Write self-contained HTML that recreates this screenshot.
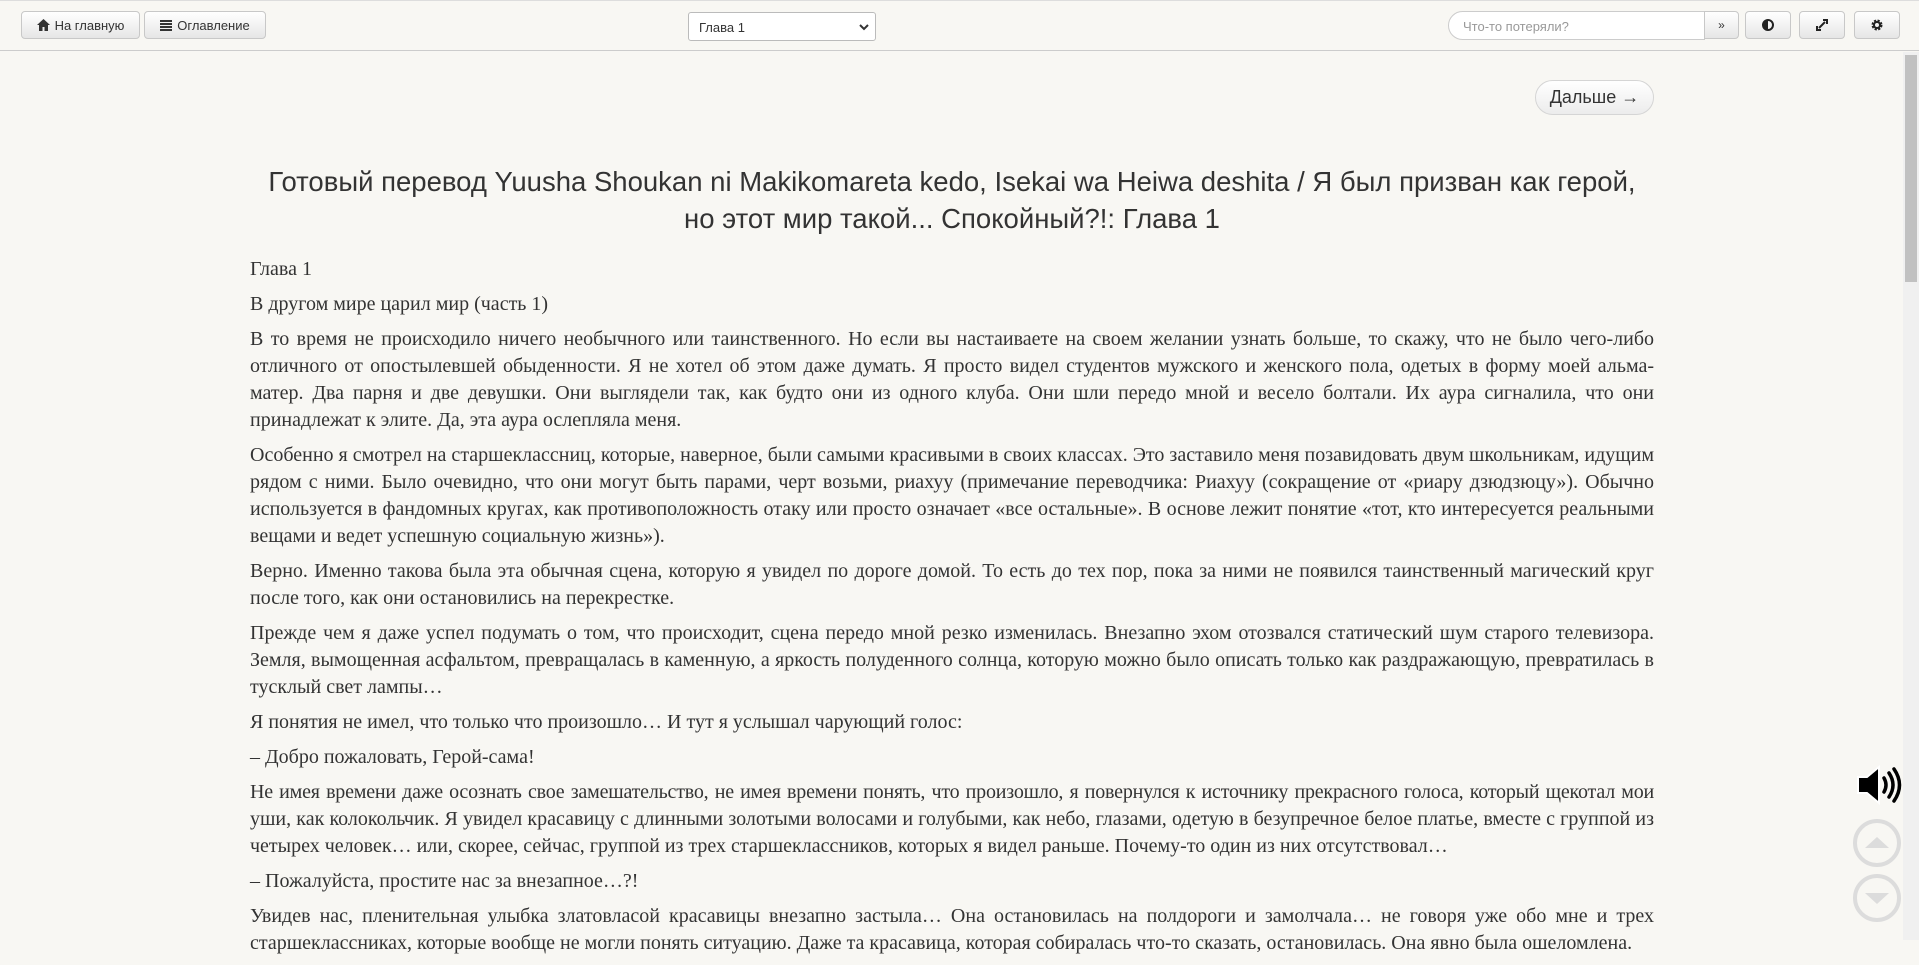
<!DOCTYPE html>
<html><head><meta charset="utf-8"><style>
*{box-sizing:border-box}
html,body{margin:0;padding:0;width:1919px;height:940px;overflow:hidden;background:#f8f7f3;font-family:"Liberation Sans",sans-serif}
.bar{position:absolute;left:0;top:0;width:1919px;height:51px;border-bottom:1px solid #ccc;border-top:1px solid #ddd;background:#f8f7f3}
.btn{position:absolute;top:10px;height:28px;border:1px solid #c8c8c8;border-radius:4px;background:linear-gradient(#fff,#e6e6e6);font-size:13px;color:#333;display:flex;align-items:center;justify-content:center;gap:5px}
.sel{position:absolute;left:688px;top:11px;width:188px;height:29px;border:1px solid #bbb;border-radius:3px;background:#fff;font-size:13px;color:#333;padding:7px 10px}
.search{position:absolute;left:1448px;top:10px;width:257px;height:29px;border:1px solid #ccc;border-radius:15px 0 0 15px;background:#fff;font-size:13px;color:#999;padding:7px 14px}
.scroll{position:absolute;left:1903px;top:52px;width:16px;height:888px;background:#f0f0f0}
.thumb{position:absolute;left:1905px;top:55px;width:12px;height:227px;background:#c1c1c1}
.next{position:absolute;left:1535px;top:80px;width:119px;height:35px;border:1px solid #d5d5d5;border-radius:18px;background:linear-gradient(#fff,#ececec);font-size:18px;color:#333;text-align:center;line-height:33px}
h1{position:absolute;left:250px;top:163px;width:1404px;margin:0;text-align:center;font-weight:normal;font-size:27.5px;line-height:37px;color:#333}
.txt{position:absolute;left:250px;top:256px;width:1404px;font-family:"Liberation Serif",serif;font-size:20px;line-height:27px;color:#333;text-align:justify}
.txt p{margin:0 0 8px}
.j{display:block;text-align-last:justify;white-space:nowrap}
.t{letter-spacing:-0.2px;word-spacing:-1.5px}
</style></head><body>
<div class="bar">
<div class="btn" style="left:21px;width:119px"><svg width="13" height="12" viewBox="0 0 13 12"><path d="M6.5 0L0 6h2v6h3.5V8h2v4H11V6h2z" fill="#333"/></svg>На главную</div>
<div class="btn" style="left:144px;width:122px"><svg width="12" height="11" viewBox="0 0 12 11"><path d="M0 0h12v2H0zM0 3h12v2H0zM0 6h12v2H0zM0 9h12v2H0z" fill="#333"/></svg>Оглавление</div>
<div class="sel">Глава 1<svg style="position:absolute;right:6px;top:11px" width="10" height="7" viewBox="0 0 10 7"><path d="M1 1l4 4 4-4" stroke="#333" stroke-width="2" fill="none"/></svg></div>
<div class="search">Что-то потеряли?</div>
<div class="btn" style="left:1704px;width:35px;border-radius:0 4px 4px 0;font-size:12px">»</div>
<div class="btn" style="left:1745px;width:46px"><svg width="12" height="12"><circle cx="6" cy="6" r="5" fill="none" stroke="#222" stroke-width="2"/><path d="M6 1a5 5 0 0 0 0 10z" fill="#222"/></svg></div>
<div class="btn" style="left:1799px;width:46px"><svg width="12" height="12"><path d="M3 9L9 3M7 1h4v4M1 7v4h4" stroke="#222" stroke-width="2" fill="none"/></svg></div>
<div class="btn" style="left:1854px;width:46px"><svg width="12" height="12"><circle cx="6" cy="6" r="4" fill="none" stroke="#222" stroke-width="3" stroke-dasharray="2 1.2"/><circle cx="6" cy="6" r="3" fill="none" stroke="#222" stroke-width="2"/></svg></div>
</div>
<div class="scroll"></div><div class="thumb"></div>
<div class="next">Дальше →</div>
<h1>Готовый перевод Yuusha Shoukan ni Makikomareta kedo, Isekai wa Heiwa deshita / Я был призван как герой, но этот мир такой... Спокойный?!: Глава 1</h1>
<div class="txt">
<p>Глава 1</p>
<p>В другом мире царил мир (часть 1)</p>
<p><span class="j">В то время не происходило ничего необычного или таинственного. Но если вы настаиваете на своем желании узнать больше, то скажу, что не было чего-либо</span>отличного от опостылевшей обыденности. Я не хотел об этом даже думать. Я просто видел студентов мужского и женского пола, одетых в форму моей альма-матер. Два парня и две девушки. Они выглядели так, как будто они из одного клуба. Они шли передо мной и весело болтали. Их аура сигналила, что они принадлежат к элите. Да, эта аура ослепляла меня.</p>
<p>Особенно я смотрел на старшеклассниц, которые, наверное, были самыми красивыми в своих классах. Это заставило меня позавидовать двум школьникам, идущим рядом с ними. Было очевидно, что они могут быть парами, черт возьми, риахуу (примечание переводчика: Риахуу (сокращение от «риару дзюдзюцу»). Обычно используется в фандомных кругах, как противоположность отаку или просто означает «все остальные». В основе лежит понятие «тот, кто интересуется реальными вещами и ведет успешную социальную жизнь»).</p>
<p>Верно. Именно такова была эта обычная сцена, которую я увидел по дороге домой. То есть до тех пор, пока за ними не появился таинственный магический круг после того, как они остановились на перекрестке.</p>
<p>Прежде чем я даже успел подумать о том, что происходит, сцена передо мной резко изменилась. Внезапно эхом отозвался статический шум старого телевизора. Земля, вымощенная асфальтом, превращалась в каменную, а яркость полуденного солнца, которую можно было описать только как раздражающую, превратилась в тусклый свет лампы…</p>
<p>Я понятия не имел, что только что произошло… И тут я услышал чарующий голос:</p>
<p>– Добро пожаловать, Герой-сама!</p>
<p><span class="j t">Не имея времени даже осознать свое замешательство, не имея времени понять, что произошло, я повернулся к источнику прекрасного голоса, который щекотал мои</span><span class="j">уши, как колокольчик. Я увидел красавицу с длинными золотыми волосами и голубыми, как небо, глазами, одетую в безупречное белое платье, вместе с группой из</span>четырех человек… или, скорее, сейчас, группой из трех старшеклассников, которых я видел раньше. Почему-то один из них отсутствовал…</p>
<p>– Пожалуйста, простите нас за внезапное…?!</p>
<p>Увидев нас, пленительная улыбка златовласой красавицы внезапно застыла… Она остановилась на полдороги и замолчала… не говоря уже обо мне и трех старшеклассниках, которые вообще не могли понять ситуацию. Даже та красавица, которая собиралась что-то сказать, остановилась. Она явно была ошеломлена.</p>
</div>
<svg style="position:absolute;left:1856px;top:764px" width="46" height="42" viewBox="0 0 46 42"><path d="M2 13h9l12-10v36l-12-10H2z" fill="#000" stroke="#fff" stroke-width="2"/><path d="M28 14q4 7 0 14M33 9q8 12 0 24M38 5q11 16 0 32" stroke="#000" stroke-width="3.5" fill="none" stroke-linecap="round"/></svg>
<svg style="position:absolute;left:1852px;top:818px" width="50" height="50"><circle cx="25" cy="25" r="22" fill="none" stroke="#dcdcdc" stroke-width="4"/><path d="M13 30L25 19 37 30z" fill="#dcdcdc"/></svg>
<svg style="position:absolute;left:1852px;top:873px" width="50" height="50"><circle cx="25" cy="25" r="22" fill="none" stroke="#dcdcdc" stroke-width="4"/><path d="M13 20L25 31 37 20z" fill="#dcdcdc"/></svg>
</body></html>
